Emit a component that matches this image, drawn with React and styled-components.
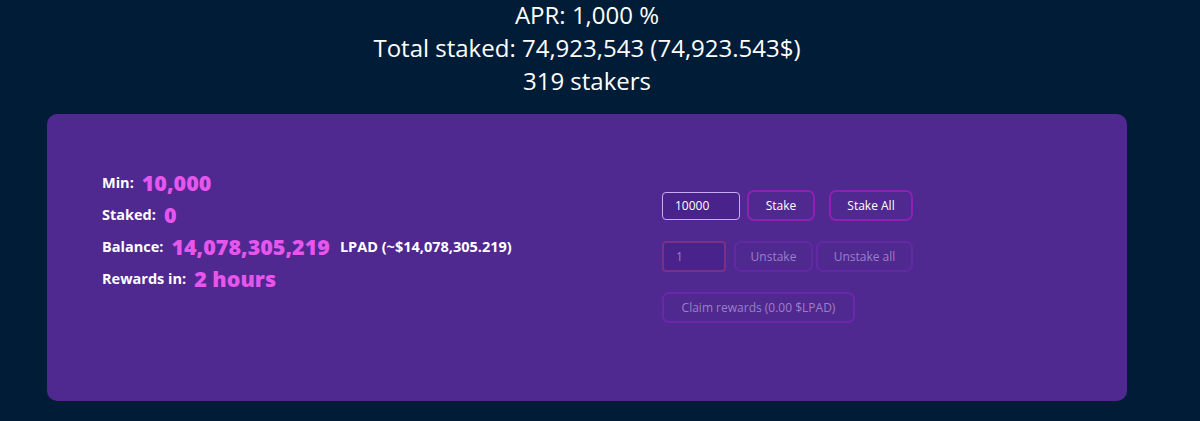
import React from 'react';
import styled, { createGlobalStyle } from 'styled-components';

const GlobalStyle = createGlobalStyle`
  html, body {
    margin: 0;
    padding: 0;
    background: #011c36;
    font-family: 'Open Sans', 'Noto Sans', sans-serif;
  }
`;

const Page = styled.div`
  width: 1174px;
  padding-bottom: 21px;
`;

const Header = styled.div`
  display: flex;
  flex-direction: column;
  align-items: center;
  color: #ffffff;
  font-size: 24px;
  line-height: 33px;
  margin-top: -2px;
`;

const Card = styled.div`
  margin: 17px 47px 0;
  height: 287px;
  box-sizing: border-box;
  background: #4f2890;
  border-radius: 10px;
  padding: 52px 55px;
  display: grid;
  grid-template-columns: 560px 1fr;
`;

const Stats = styled.div`
  display: flex;
  flex-direction: column;
`;

const StatRow = styled.div`
  display: flex;
  align-items: center;
  height: 32px;
  gap: 8px;
`;

const Label = styled.span`
  color: #ffffff;
  font-size: 14.5px;
  font-weight: 700;
`;

const Value = styled.span`
  color: #e556ec;
  font-size: 21.5px;
  font-weight: 800;
`;

const Note = styled.span`
  color: #ffffff;
  font-size: 14.5px;
  font-weight: 700;
  margin-left: 2px;
`;

const Actions = styled.div`
  display: flex;
  flex-direction: column;
  gap: 20px;
  margin-top: 24px;
`;

const ActionRow = styled.div`
  display: flex;
  align-items: center;
  gap: ${(p) => p.$gap || 7}px;
`;

const AmountInput = styled.input`
  box-sizing: border-box;
  width: ${(p) => p.$width}px;
  height: ${(p) => (p.disabled ? 31 : 28)}px;
  padding: 0 12px;
  background: #4a228c;
  border: ${(p) => (p.disabled ? '2px solid #7b2f86' : '1px solid #c8aef0')};
  border-radius: 4px;
  color: ${(p) => (p.disabled ? '#9b80c9' : '#ffffff')};
  font-family: inherit;
  font-size: 12px;
  outline: none;
`;

const ActionButton = styled.button`
  box-sizing: border-box;
  width: ${(p) => p.$width}px;
  height: 31px;
  padding: 0;
  background: transparent;
  border: 2px solid ${(p) => (p.disabled ? '#6229a4' : '#8c21b4')};
  border-radius: 7px;
  color: ${(p) => (p.disabled ? '#9b80c9' : '#ffffff')};
  font-family: inherit;
  font-size: 12px;
  cursor: pointer;
`;

const ClaimButton = styled(ActionButton)`
  border-color: #6a28a8;
`;

export default function App() {
  return (
    <Page>
      <GlobalStyle />
      <Header>
        <div>APR: 1,000 %</div>
        <div>Total staked: 74,923,543 (74,923.543$)</div>
        <div>319 stakers</div>
      </Header>
      <Card>
        <Stats>
          <StatRow>
            <Label>Min:</Label>
            <Value>10,000</Value>
          </StatRow>
          <StatRow>
            <Label>Staked:</Label>
            <Value>0</Value>
          </StatRow>
          <StatRow>
            <Label>Balance:</Label>
            <Value>14,078,305,219</Value>
            <Note>LPAD (~$14,078,305.219)</Note>
          </StatRow>
          <StatRow>
            <Label>Rewards in:</Label>
            <Value>2 hours</Value>
          </StatRow>
        </Stats>
        <Actions>
          <ActionRow>
            <AmountInput $width={78} defaultValue="10000" />
            <ActionButton $width={68}>Stake</ActionButton>
            <ActionButton $width={84} style={{ marginLeft: 7 }}>Stake All</ActionButton>
          </ActionRow>
          <ActionRow $gap={3}>
            <AmountInput $width={64} defaultValue="1" disabled />
            <ActionButton $width={79} disabled style={{ marginLeft: 5 }}>Unstake</ActionButton>
            <ActionButton $width={97} disabled>Unstake all</ActionButton>
          </ActionRow>
          <ActionRow>
            <ClaimButton $width={193} disabled>Claim rewards (0.00 $LPAD)</ClaimButton>
          </ActionRow>
        </Actions>
      </Card>
    </Page>
  );
}
